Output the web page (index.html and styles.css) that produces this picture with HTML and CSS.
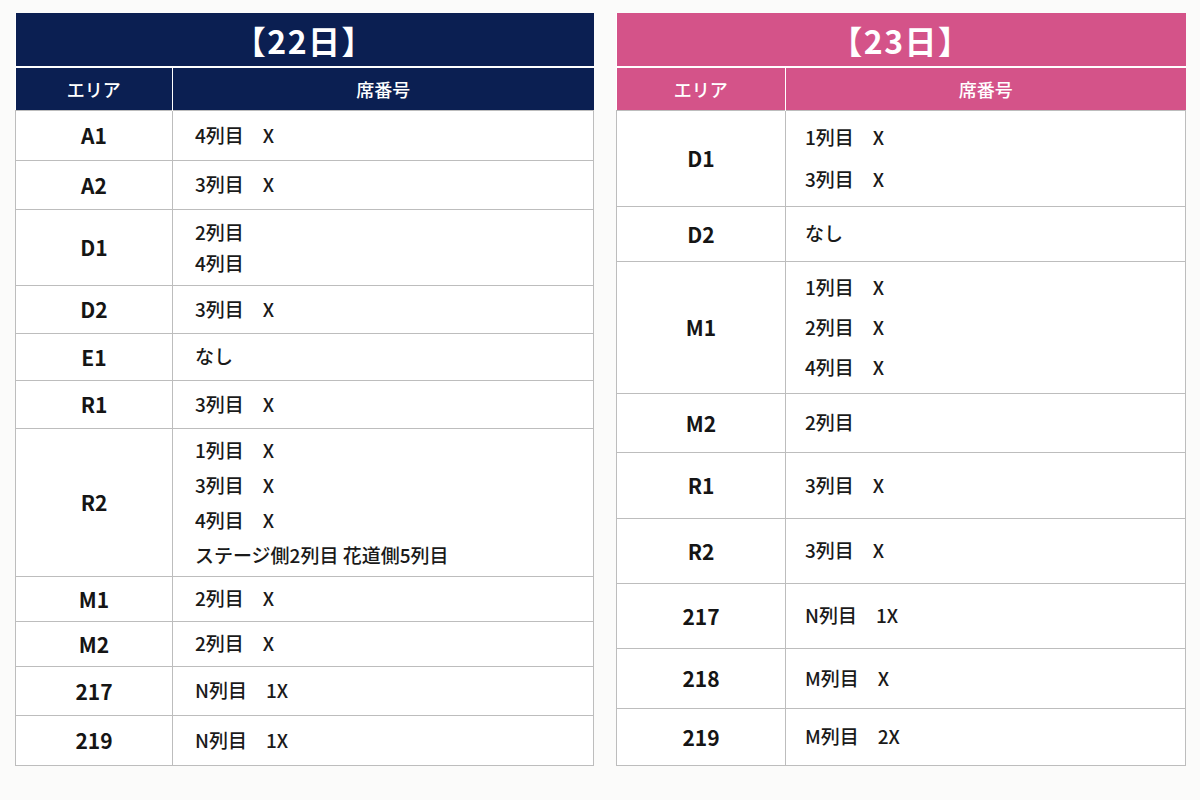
FILE: index.html
```html
<!DOCTYPE html>
<html lang="ja">
<head>
<meta charset="utf-8">
<link rel="stylesheet" href="styles.css">
</head>
<body>
<div class="page">
  <table class="sheet navy">
    <colgroup><col class="col-area"><col></colgroup>
    <thead>
      <tr class="h-title"><th colspan="2" class="title">【22日】</th></tr>
      <tr class="h-col"><th class="c-area">エリア</th><th class="c-seat">席番号</th></tr>
    </thead>
    <tbody>
      <tr class="r50"><td class="area">A1</td><td class="seat">4列目　X</td></tr>
      <tr class="r49"><td class="area">A2</td><td class="seat">3列目　X</td></tr>
      <tr class="r76"><td class="area">D1</td><td class="seat lh31">2列目<br>4列目</td></tr>
      <tr class="r48"><td class="area">D2</td><td class="seat">3列目　X</td></tr>
      <tr class="r47"><td class="area">E1</td><td class="seat">なし</td></tr>
      <tr class="r48"><td class="area">R1</td><td class="seat">3列目　X</td></tr>
      <tr class="r148"><td class="area">R2</td><td class="seat lh35">1列目　X<br>3列目　X<br>4列目　X<br>ステージ側2列目 花道側5列目</td></tr>
      <tr class="r45"><td class="area">M1</td><td class="seat">2列目　X</td></tr>
      <tr class="r45"><td class="area">M2</td><td class="seat">2列目　X</td></tr>
      <tr class="r49"><td class="area">217</td><td class="seat">N列目　1X</td></tr>
      <tr class="r50"><td class="area">219</td><td class="seat">N列目　1X</td></tr>
    </tbody>
  </table>
  <table class="sheet pink">
    <colgroup><col class="col-area"><col></colgroup>
    <thead>
      <tr class="h-title"><th colspan="2" class="title">【23日】</th></tr>
      <tr class="h-col"><th class="c-area">エリア</th><th class="c-seat">席番号</th></tr>
    </thead>
    <tbody>
      <tr class="r96"><td class="area">D1</td><td class="seat lh42">1列目　X<br>3列目　X</td></tr>
      <tr class="r55"><td class="area">D2</td><td class="seat">なし</td></tr>
      <tr class="r132"><td class="area">M1</td><td class="seat lh40">1列目　X<br>2列目　X<br>4列目　X</td></tr>
      <tr class="r59"><td class="area">M2</td><td class="seat">2列目</td></tr>
      <tr class="r66"><td class="area">R1</td><td class="seat">3列目　X</td></tr>
      <tr class="r65"><td class="area">R2</td><td class="seat">3列目　X</td></tr>
      <tr class="r65"><td class="area">217</td><td class="seat">N列目　1X</td></tr>
      <tr class="r60"><td class="area">218</td><td class="seat">M列目　X</td></tr>
      <tr class="r57"><td class="area">219</td><td class="seat">M列目　2X</td></tr>
    </tbody>
  </table>
</div>
</body>
</html>
```
FILE: styles.css
```css
* { box-sizing: border-box; }
html, body {
  margin: 0;
  padding: 0;
  background: #fbfbfa;
}
body {
  font-family: "Noto Sans CJK JP", "Noto Sans", sans-serif;
  color: #1a1a1a;
}
.page {
  display: flex;
  align-items: flex-start;
  gap: 22px;
  padding: 13px 14px 0 15px;
}
.sheet {
  border-collapse: collapse;
  table-layout: fixed;
  background: #ffffff;
}
.sheet.navy { width: 579px; }
.sheet.pink { width: 570px; }
.navy .col-area { width: 157px; }
.pink .col-area { width: 169px; }
.sheet th { padding: 0; color: #ffffff; }
.sheet td { border: 1px solid #bdbdbd; padding: 0; }

.navy .title, .navy .c-area, .navy .c-seat { background: #0b1f52; border-color: #0b1f52; }
.pink .title, .pink .c-area, .pink .c-seat { background: #d45389; border-color: #d45389; }

.h-title { height: 54px; }
.title {
  font-size: 32px;
  font-weight: 700;
  letter-spacing: 1.5px;
  text-align: center;
  border-bottom: 2px solid #ffffff !important;
}
.h-col { height: 43px; }
.c-area, .c-seat {
  font-size: 18px;
  font-weight: 500;
  text-align: center;
}
.c-area { border-right: 1px solid #ffffff !important; }

.area {
  text-align: center;
  font-size: 21px;
  font-weight: 700;
  color: #151515;
}
.seat {
  font-size: 19px;
  font-weight: 500;
  padding-left: 22px !important;
  line-height: 1.4;
  color: #1a1a1a;
}
.pink .seat { padding-left: 19px !important; }

.lh31 { line-height: 31px; }
.lh35 { line-height: 35px; }
.lh40 { line-height: 40px; }
.lh42 { line-height: 42px; }

.r45 { height: 45px; }
.r47 { height: 47px; }
.r48 { height: 48px; }
.r49 { height: 49px; }
.r50 { height: 50px; }
.r55 { height: 55px; }
.r57 { height: 57px; }
.r59 { height: 59px; }
.r60 { height: 60px; }
.r65 { height: 65px; }
.r66 { height: 66px; }
.r76 { height: 76px; }
.r96 { height: 96px; }
.r132 { height: 132px; }
.r148 { height: 148px; }
```
